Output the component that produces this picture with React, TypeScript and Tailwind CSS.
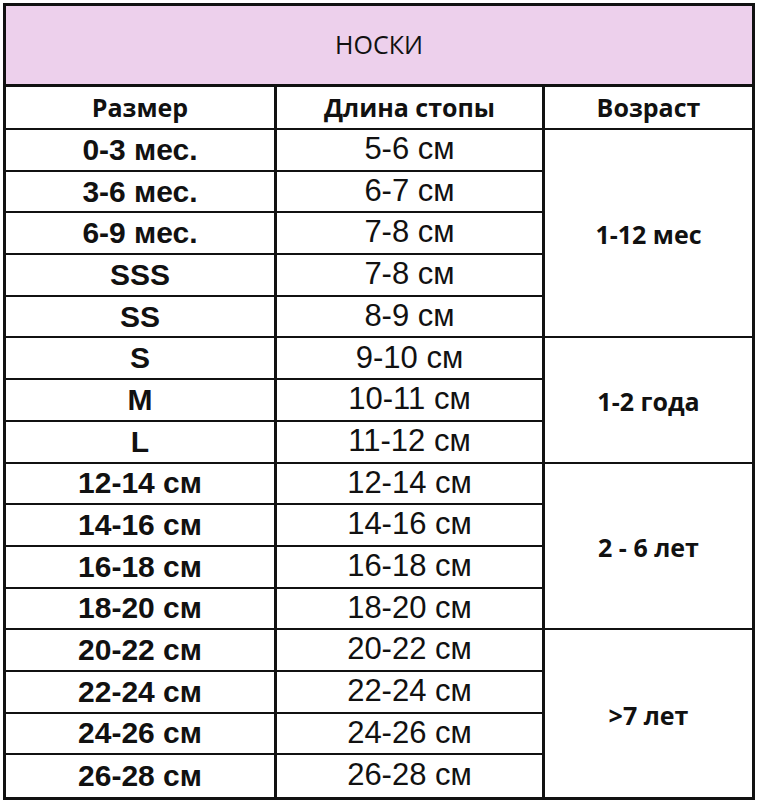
const sizes = [
  { size: "0-3 мес.", foot: "5-6 см" },
  { size: "3-6 мес.", foot: "6-7 см" },
  { size: "6-9 мес.", foot: "7-8 см" },
  { size: "SSS", foot: "7-8 см" },
  { size: "SS", foot: "8-9 см" },
  { size: "S", foot: "9-10 см" },
  { size: "M", foot: "10-11 см" },
  { size: "L", foot: "11-12 см" },
  { size: "12-14 см", foot: "12-14 см" },
  { size: "14-16 см", foot: "14-16 см" },
  { size: "16-18 см", foot: "16-18 см" },
  { size: "18-20 см", foot: "18-20 см" },
  { size: "20-22 см", foot: "20-22 см" },
  { size: "22-24 см", foot: "22-24 см" },
  { size: "24-26 см", foot: "24-26 см" },
  { size: "26-28 см", foot: "26-28 см" },
];

// age groups start at these rows
const ages: Record<number, { label: string; span: string; last?: boolean }> = {
  0: { label: "1-12 мес", span: "row-span-5" },
  5: { label: "1-2 года", span: "row-span-3" },
  8: { label: "2 - 6 лет", span: "row-span-4" },
  12: { label: ">7 лет", span: "row-span-4", last: true },
};

const calibri = "font-['Open_Sans',sans-serif]";
const arial = "font-['Liberation_Sans',Arial,sans-serif]";

function App() {
  return (
    <div className="w-[758px] h-[808px] bg-white pt-[3px] pl-[3px] text-[#111]">
      <div className="w-[752px] border-[3px] border-[#111]">
        <div
          className={`h-[81px] bg-[#edd0ec] border-b-[3px] border-[#111] flex items-center justify-center text-[25px] ${calibri}`}
        >
          НОСКИ
        </div>

        <div className="grid grid-cols-[271px_268px_207px] grid-rows-[43px_repeat(16,41.69px)]">
          <div
            className={`border-b-2 border-r-[3px] border-[#111] flex items-center justify-center text-[25px] font-bold ${calibri}`}
          >
            Размер
          </div>
          <div
            className={`border-b-2 border-r-[3px] border-[#111] flex items-center justify-center text-[25px] font-bold ${calibri}`}
          >
            Длина стопы
          </div>
          <div
            className={`border-b-2 border-[#111] flex items-center justify-center text-[25px] font-bold ${calibri}`}
          >
            Возраст
          </div>

          {sizes.map((row, i) => {
            const isLast = i === sizes.length - 1;
            const age = ages[i];
            return [
              <div
                key={`s${i}`}
                className={`border-r-[3px] border-[#111] flex items-center justify-center pb-[1px] text-[30px] font-bold ${arial} ${
                  isLast ? "" : "border-b-2"
                }`}
              >
                {row.size}
              </div>,
              <div
                key={`f${i}`}
                className={`border-r-[3px] border-[#111] flex items-center justify-center pb-[1px] text-[31px] ${arial} ${
                  isLast ? "" : "border-b-2"
                }`}
              >
                {row.foot}
              </div>,
              age && (
                <div
                  key={`a${i}`}
                  className={`${age.span} border-[#111] flex items-center justify-center pt-[4px] text-[25px] font-bold ${calibri} ${
                    age.last ? "" : "border-b-2"
                  }`}
                >
                  {age.label}
                </div>
              ),
            ];
          })}
        </div>
      </div>
    </div>
  );
}

export default App;
